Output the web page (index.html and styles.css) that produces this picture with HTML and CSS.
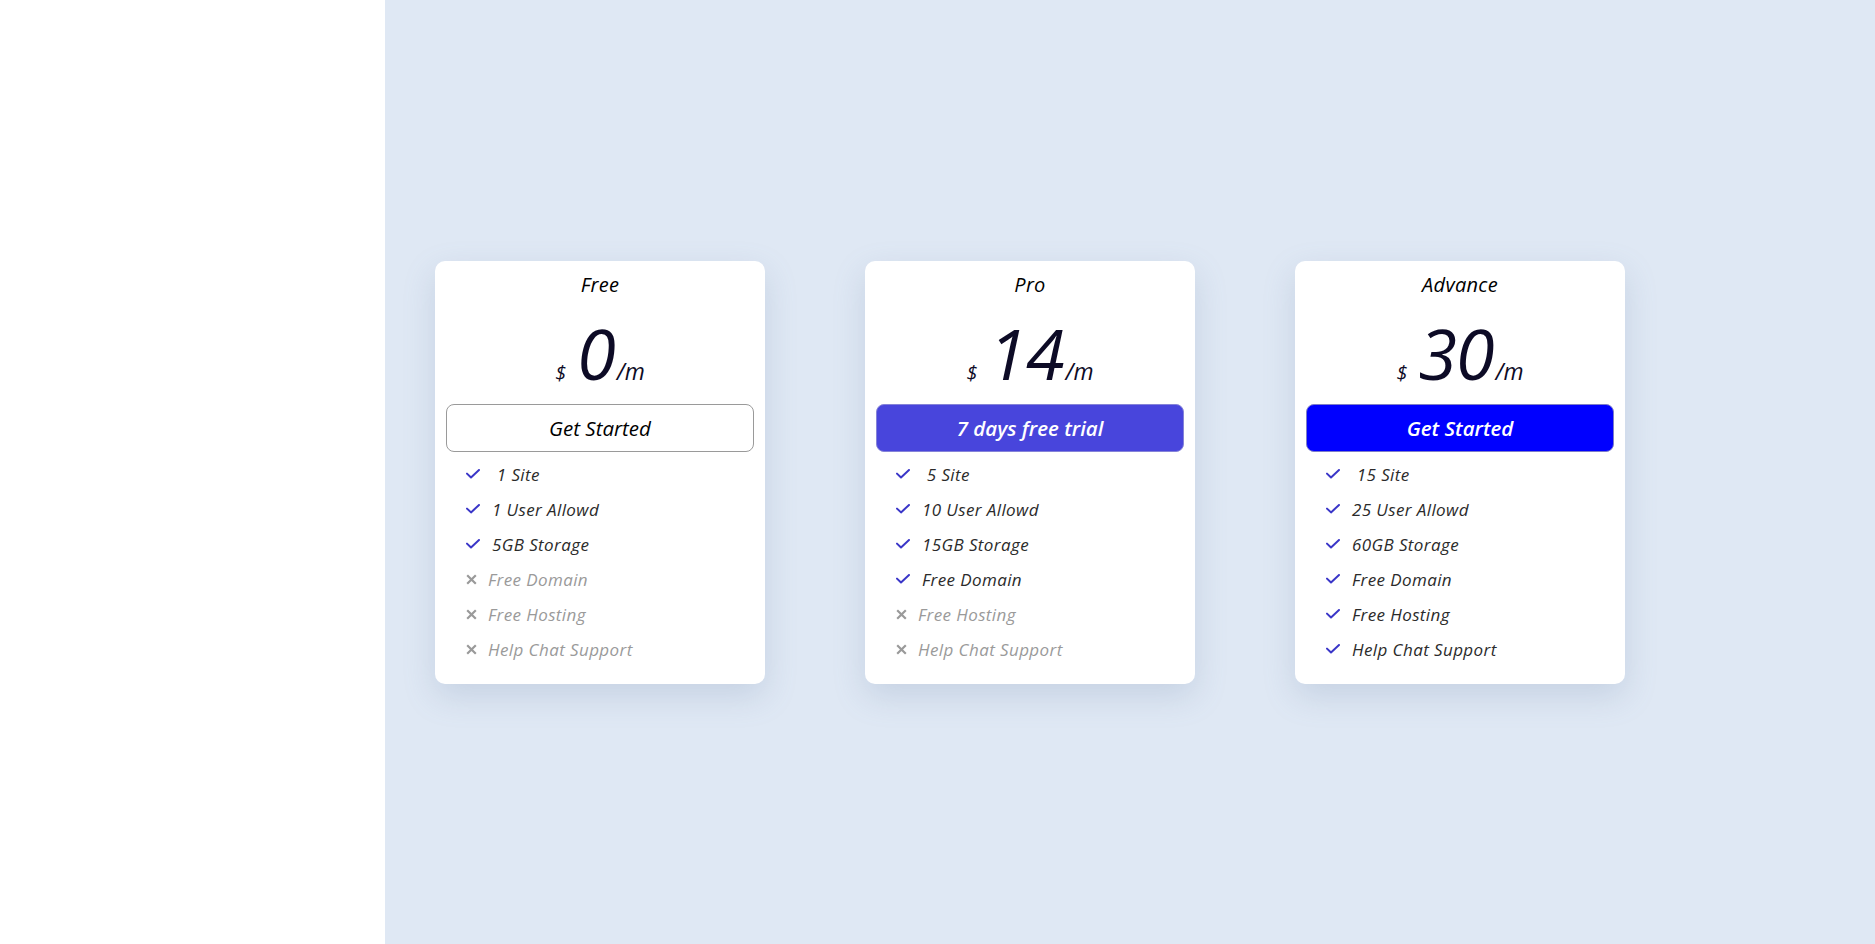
FILE: index.html
```html
<!DOCTYPE html>
<html lang="en">
<head>
<meta charset="utf-8">
<title>Pricing</title>
<link rel="stylesheet" href="styles.css">
</head>
<body>
<div class="page">
  <aside class="sidebar"></aside>
  <main class="main">
    <div class="card">
      <div class="title">Free</div>
      <div class="price"><span class="cur">$</span><span class="amt">0</span><span class="per">/m</span></div>
      <button class="btn btn-outline">Get Started</button>
      <ul class="features">
        <li class="yes"><svg class="ic-check" viewBox="0 0 14 10"><path d="M1 4.6 L5 8.4 L13 1"/></svg><span>&nbsp;1 Site</span></li>
        <li class="yes"><svg class="ic-check" viewBox="0 0 14 10"><path d="M1 4.6 L5 8.4 L13 1"/></svg><span>1 User Allowd</span></li>
        <li class="yes"><svg class="ic-check" viewBox="0 0 14 10"><path d="M1 4.6 L5 8.4 L13 1"/></svg><span>5GB Storage</span></li>
        <li class="no"><svg class="ic-x" viewBox="0 0 11 11"><path d="M1.2 1.2 L9.8 9.8 M9.8 1.2 L1.2 9.8"/></svg><span>Free Domain</span></li>
        <li class="no"><svg class="ic-x" viewBox="0 0 11 11"><path d="M1.2 1.2 L9.8 9.8 M9.8 1.2 L1.2 9.8"/></svg><span>Free Hosting</span></li>
        <li class="no"><svg class="ic-x" viewBox="0 0 11 11"><path d="M1.2 1.2 L9.8 9.8 M9.8 1.2 L1.2 9.8"/></svg><span>Help Chat Support</span></li>
      </ul>
    </div>
    <div class="card">
      <div class="title">Pro</div>
      <div class="price"><span class="cur">$</span><span class="amt">14</span><span class="per">/m</span></div>
      <button class="btn btn-trial">7 days free trial</button>
      <ul class="features">
        <li class="yes"><svg class="ic-check" viewBox="0 0 14 10"><path d="M1 4.6 L5 8.4 L13 1"/></svg><span>&nbsp;5 Site</span></li>
        <li class="yes"><svg class="ic-check" viewBox="0 0 14 10"><path d="M1 4.6 L5 8.4 L13 1"/></svg><span>10 User Allowd</span></li>
        <li class="yes"><svg class="ic-check" viewBox="0 0 14 10"><path d="M1 4.6 L5 8.4 L13 1"/></svg><span>15GB Storage</span></li>
        <li class="yes"><svg class="ic-check" viewBox="0 0 14 10"><path d="M1 4.6 L5 8.4 L13 1"/></svg><span>Free Domain</span></li>
        <li class="no"><svg class="ic-x" viewBox="0 0 11 11"><path d="M1.2 1.2 L9.8 9.8 M9.8 1.2 L1.2 9.8"/></svg><span>Free Hosting</span></li>
        <li class="no"><svg class="ic-x" viewBox="0 0 11 11"><path d="M1.2 1.2 L9.8 9.8 M9.8 1.2 L1.2 9.8"/></svg><span>Help Chat Support</span></li>
      </ul>
    </div>
    <div class="card">
      <div class="title">Advance</div>
      <div class="price"><span class="cur">$</span><span class="amt">30</span><span class="per">/m</span></div>
      <button class="btn btn-solid">Get Started</button>
      <ul class="features">
        <li class="yes"><svg class="ic-check" viewBox="0 0 14 10"><path d="M1 4.6 L5 8.4 L13 1"/></svg><span>&nbsp;15 Site</span></li>
        <li class="yes"><svg class="ic-check" viewBox="0 0 14 10"><path d="M1 4.6 L5 8.4 L13 1"/></svg><span>25 User Allowd</span></li>
        <li class="yes"><svg class="ic-check" viewBox="0 0 14 10"><path d="M1 4.6 L5 8.4 L13 1"/></svg><span>60GB Storage</span></li>
        <li class="yes"><svg class="ic-check" viewBox="0 0 14 10"><path d="M1 4.6 L5 8.4 L13 1"/></svg><span>Free Domain</span></li>
        <li class="yes"><svg class="ic-check" viewBox="0 0 14 10"><path d="M1 4.6 L5 8.4 L13 1"/></svg><span>Free Hosting</span></li>
        <li class="yes"><svg class="ic-check" viewBox="0 0 14 10"><path d="M1 4.6 L5 8.4 L13 1"/></svg><span>Help Chat Support</span></li>
      </ul>
    </div>
  </main>
</div>
</body>
</html>
```

FILE: styles.css
```css
* { box-sizing: border-box; }
html, body { margin: 0; padding: 0; }
body {
  font-family: "Open Sans", "Liberation Sans", sans-serif;
  font-style: italic;
  color: #000;
}
.page {
  display: flex;
  height: 944px;
}
.sidebar {
  width: 385px;
  flex: none;
  background: #fff;
}
.main {
  flex: 1;
  background: #dfe8f4;
  display: flex;
  align-items: center;
  padding-left: 50px;
  gap: 100px;
}
.card {
  width: 330px;
  background: #fff;
  border-radius: 10px;
  padding: 11px 11px 17px;
  box-shadow: 0 12px 32px rgba(110, 130, 170, 0.22);
  display: flex;
  flex-direction: column;
}
.title {
  text-align: center;
  font-size: 20px;
  line-height: 26px;
  letter-spacing: 0.3px;
  color: #000;
}
.price {
  display: flex;
  justify-content: center;
  align-items: baseline;
  margin-top: 20px;
  margin-bottom: 16px;
  line-height: 1;
  color: #0d0b26;
  height: 70px;
}
.cur {
  font-size: 20px;
  margin-right: 11px;
}
.amt {
  font-size: 70px;
  letter-spacing: -1px;
}
.per {
  font-size: 23px;
  margin-left: 2px;
}
.btn {
  display: block;
  width: 100%;
  height: 48px;
  border-radius: 8px;
  font-family: inherit;
  font-style: italic;
  font-size: 20.5px;
  cursor: pointer;
}
.btn-outline {
  background: #fff;
  border: 1px solid #9a9a9a;
  color: #000;
}
.btn-trial {
  background: #4845dc;
  border: 1px solid #8583d8;
  color: #fff;
  font-weight: 600;
}
.btn-solid {
  background: #0000ff;
  border: 1px solid #7d7dc8;
  color: #fff;
  font-weight: 600;
}
.features {
  list-style: none;
  margin: 5px 0 0;
  padding: 0 0 0 20px;
}
.features li {
  display: flex;
  align-items: center;
  height: 35px;
  font-size: 17px;
  letter-spacing: 0.4px;
}
.features li.yes { color: #2b2b2b; }
.features li.no { color: #9a9a9a; }
.ic-check {
  width: 14px;
  height: 10px;
  margin-right: 12px;
  flex: none;
}
.ic-check path {
  fill: none;
  stroke: #3a36c8;
  stroke-width: 2;
  stroke-linecap: round;
  stroke-linejoin: round;
}
.ic-x {
  width: 11px;
  height: 11px;
  margin-right: 11px;
  flex: none;
}
.ic-x path {
  fill: none;
  stroke: #9a9a9a;
  stroke-width: 2.2;
}
```
